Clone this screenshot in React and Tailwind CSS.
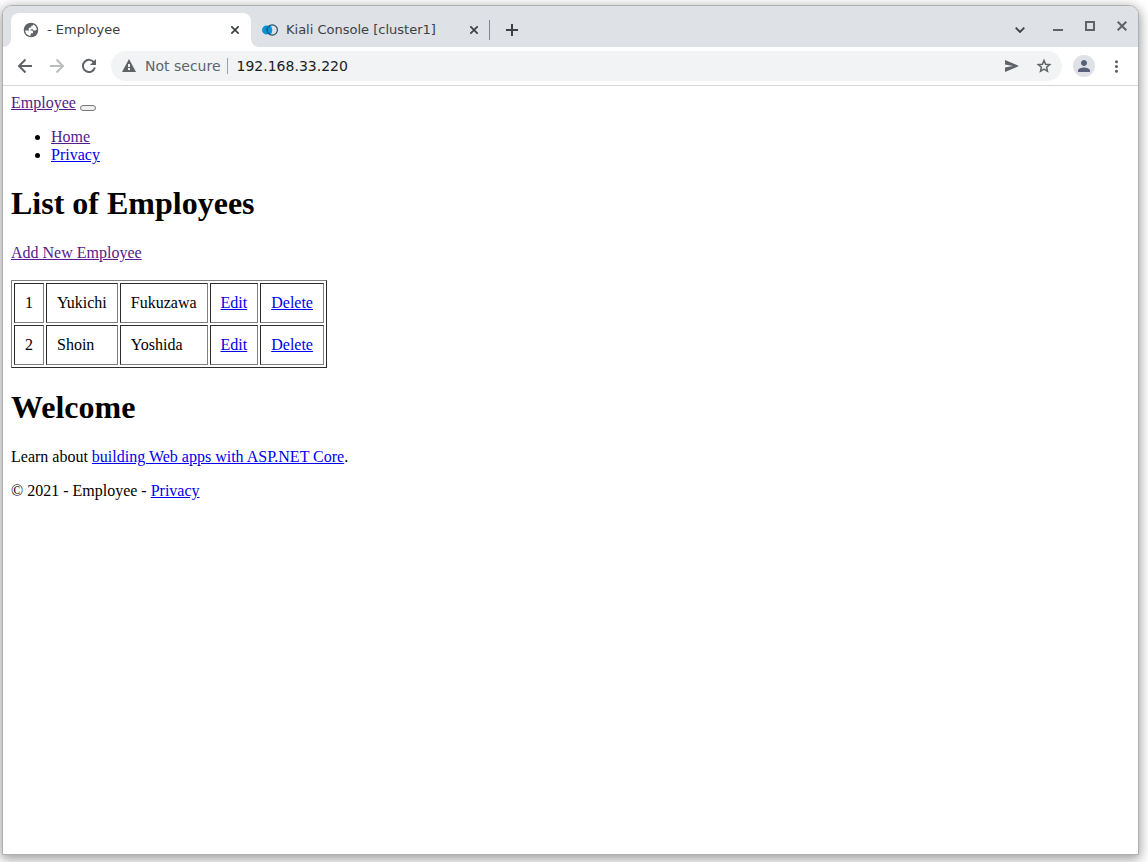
import React, { useState } from "react";
import { MdMoreVert, MdPerson } from "react-icons/md";

const employees = [
  { id: 1, first: "Yukichi", last: "Fukuzawa" },
  { id: 2, first: "Shoin", last: "Yoshida" },
];

function CloseIcon() {
  return (
    <svg width="8" height="8" viewBox="0 0 8 8" stroke="currentColor" strokeWidth="1.7" aria-hidden="true">
      <path d="M.3 .3 7.7 7.7M7.7 .3.3 7.7" />
    </svg>
  );
}

function GlobeIcon() {
  return (
    <svg width="16" height="16" viewBox="0 0 16 16" aria-hidden="true">
      <circle cx="8" cy="8" r="7.3" fill="#5f6368" />
      <path
        d="M10 2.4C12.2 3.2 13.7 5.3 13.8 7.6L12.4 8.6H10.6L9.6 7.2H7.6V8.4H9.2L10 9.6V11.2H8.4L7.6 12V13.8C4.6 13.6 2.2 11.2 2.2 8.4H4.6L5.6 9.4V6.6L6.6 5.4H8.2V4L10 3.4Z"
        fill="#fff"
      />
    </svg>
  );
}

function KialiIcon() {
  return (
    <svg width="16" height="16" viewBox="0 0 16 16" aria-hidden="true">
      <circle cx="4.4" cy="8" r="4.4" fill="#0093dd" />
      <path d="M8 3A5.6 5.6 0 0 0 8 13A6.5 6.5 0 0 0 8 3Z" fill="#0093dd" />
      <circle cx="10.2" cy="8" r="5.2" fill="none" stroke="#1f4f63" strokeWidth="1.2" />
    </svg>
  );
}

function BackIcon() {
  return (
    <svg width="16" height="16" viewBox="0 0 16 16" fill="none" stroke="currentColor" strokeWidth="2" aria-hidden="true">
      <path d="M15 8H2.5M8.5 1.5 2 8 8.5 14.5" />
    </svg>
  );
}

function ForwardIcon() {
  return (
    <svg width="16" height="16" viewBox="0 0 16 16" fill="none" stroke="currentColor" strokeWidth="2" aria-hidden="true">
      <path d="M1 8H13.5M7.5 1.5 14 8 7.5 14.5" />
    </svg>
  );
}

function ReloadIcon() {
  return (
    <svg width="16" height="16" viewBox="0 0 16 16" fill="none" stroke="currentColor" strokeWidth="2" aria-hidden="true">
      <path d="M13.2 4.7A6.1 6.1 0 1 0 13.9 9.6" />
      <path d="M15 1V7H9Z" fill="currentColor" stroke="none" />
    </svg>
  );
}

function StarIcon() {
  return (
    <svg width="16" height="16" viewBox="0 0 16 16" fill="none" stroke="currentColor" strokeWidth="1.5" aria-hidden="true">
      <path d="M8 2.5 9.6 6.3 13.7 6.6 10.6 9.3 11.5 13.3 8 11.2 4.5 13.3 5.4 9.3 2.3 6.6 6.4 6.3Z" />
    </svg>
  );
}

function Tab({ icon, title, active }) {
  return (
    <div
      role="tab"
      aria-selected={active}
      className={
        active
          ? "flex h-[34px] w-60 items-center rounded-t-lg bg-white pr-2 pl-3"
          : "flex h-[34px] w-[230px] items-center pr-[7px] pl-[3px]"
      }
    >
      {icon}
      <span className="ml-2 flex-1 truncate">{title}</span>
      <button aria-label={"Close " + title} className="flex size-4 items-center justify-center">
        <CloseIcon />
      </button>
    </div>
  );
}

function TabStrip() {
  return (
    <div className="flex h-[41px] items-end rounded-t-[9px] bg-[#dee1e6] text-[13px] text-[#3c4043]">
      <div role="tablist" className="flex items-end">
        <svg width="8" height="8" viewBox="0 0 8 8" fill="#fff" aria-hidden="true">
          <path d="M8 0A8 8 0 0 1 0 8H8Z" />
        </svg>
        <Tab active icon={<GlobeIcon />} title="- Employee" />
        <svg width="8" height="8" viewBox="0 0 8 8" fill="#fff" aria-hidden="true">
          <path d="M0 0A8 8 0 0 0 8 8H0Z" />
        </svg>
        <Tab active={false} icon={<KialiIcon />} title="Kiali Console [cluster1]" />
      </div>
      <div className="mb-[7px] h-5 border-r border-[#80868b]" aria-hidden="true" />
      <button aria-label="New tab" className="ml-2 flex h-[34px] w-7 items-center justify-center">
        <svg width="12" height="12" viewBox="0 0 12 12" stroke="currentColor" strokeWidth="2">
          <path d="M6 0V12M0 6H12" />
        </svg>
      </button>
      <div className="flex-1" />
      <button aria-label="Search tabs" className="mr-1.5 flex h-[34px] w-8 items-center justify-center">
        <svg width="10" height="6" viewBox="0 0 10 6" fill="none" stroke="currentColor" strokeWidth="1.8">
          <path d="M.7 .7 5 5 9.3 .7" />
        </svg>
      </button>
      <div className="flex self-start text-[#5f6368]">
        <button aria-label="Minimize" className="flex h-10 w-8 items-center justify-center">
          <svg width="10" height="10" viewBox="0 0 10 10" fill="currentColor">
            <path d="M0 8H10V10H0Z" />
          </svg>
        </button>
        <button aria-label="Maximize" className="flex h-10 w-8 items-center justify-center">
          <svg width="10" height="10" viewBox="0 0 10 10" fill="none" stroke="currentColor" strokeWidth="2">
            <path d="M1 1H9V9H1Z" />
          </svg>
        </button>
        <button aria-label="Close window" className="flex h-10 w-8 items-center justify-center">
          <svg width="10" height="10" viewBox="0 0 10 10" stroke="currentColor" strokeWidth="2">
            <path d="M.7 .7 9.3 9.3M9.3 .7.7 9.3" />
          </svg>
        </button>
      </div>
    </div>
  );
}

function ToolButton({ label, className, children }) {
  return (
    <button aria-label={label} className={"flex h-[30px] w-8 items-center justify-center " + (className || "")}>
      {children}
    </button>
  );
}

function Toolbar() {
  const [url, setUrl] = useState("192.168.33.220");
  return (
    <div className="flex h-[39px] items-center border-b border-[#d5d7da] pl-1.5 text-[14px] text-[#5f6368]">
      <ToolButton label="Back"><BackIcon /></ToolButton>
      <ToolButton label="Forward" className="text-[#babcbe]"><ForwardIcon /></ToolButton>
      <ToolButton label="Reload"><ReloadIcon /></ToolButton>
      <div className="ml-1.5 flex h-[30px] flex-1 items-center rounded-full bg-[#f1f3f4] pr-0.5 pl-[11px]">
        <svg width="14" height="14" viewBox="0 0 14 14" aria-hidden="true">
          <path d="M7 0 14 13H0Z" fill="#5f6368" />
          <path d="M6 5H8V8H6ZM6 9H8V11H6Z" fill="#f1f3f4" />
        </svg>
        <label htmlFor="address" className="ml-[9px]">Not secure</label>
        <div className="ml-1.5 h-4 border-r border-[#9aa0a6]" aria-hidden="true" />
        <input
          id="address"
          value={url}
          onChange={(e) => setUrl(e.target.value)}
          className="ml-[9px] min-w-0 flex-1 bg-transparent text-[#202124] outline-none"
        />
        <ToolButton label="Share">
          <svg width="14" height="12" viewBox="0 0 14 12" fill="currentColor">
            <path d="M0 0 14 6 0 12V7.5L8 6 0 4.5Z" />
          </svg>
        </ToolButton>
        <ToolButton label="Bookmark"><StarIcon /></ToolButton>
      </div>
      <button
        aria-label="Profile"
        className="ml-[11px] flex size-[22px] items-center justify-center rounded-full bg-[#dee1e6] text-[#56607a]"
      >
        <MdPerson size={18} />
      </button>
      <ToolButton label="Menu" className="mr-1.5 ml-[5px]"><MdMoreVert size={19} /></ToolButton>
    </div>
  );
}

const link = "text-[#0000ee] underline";
const visited = "text-[#551a8b] underline";
const cell =
  "border border-t-[#2c2c2c] border-l-[#2c2c2c] border-r-[#808080] border-b-[#808080] p-2.5";

function EmployeeTable() {
  return (
    <table className="mt-[18px] border-separate border-spacing-0.5 border border-t-[#808080] border-l-[#808080] border-r-[#2c2c2c] border-b-[#2c2c2c]">
      <tbody>
        {employees.map((e) => (
          <tr key={e.id}>
            <td className={cell}>{e.id}</td>
            <td className={cell}>{e.first}</td>
            <td className={cell}>{e.last}</td>
            <td className={cell}><a href="#edit" className={link}>Edit</a></td>
            <td className={cell}><a href="#delete" className={link}>Delete</a></td>
          </tr>
        ))}
      </tbody>
    </table>
  );
}

function Page() {
  return (
    <div className="p-2 font-['Liberation_Serif',serif] text-[16px] leading-[18px] text-black">
      <header>
        <nav>
          <div className="flex gap-1">
            <a href="#employee" className={visited}>Employee</a>
            <button
              aria-label="Toggle navigation"
              className="mt-[11px] h-1.5 w-4 rounded-[3px] border border-[#767676] bg-[#efefef]"
            />
          </div>
          <ul className="mt-4 list-disc pl-10">
            <li><a href="#home" className={visited}>Home</a></li>
            <li><a href="#privacy" className={link}>Privacy</a></li>
          </ul>
        </nav>
      </header>
      <main>
        <h1 className="mt-[21px] text-[32px] leading-[37px] font-bold">List of Employees</h1>
        <p className="mt-[22px]"><a href="#add" className={visited}>Add New Employee</a></p>
        <EmployeeTable />
        <h1 className="mt-[21px] text-[32px] leading-[37px] font-bold">Welcome</h1>
        <p className="mt-[22px]">
          Learn about <a href="#learn" className={link}>building Web apps with ASP.NET Core</a>.
        </p>
      </main>
      <footer className="mt-4">
        © 2021 - Employee - <a href="#privacy" className={link}>Privacy</a>
      </footer>
    </div>
  );
}

export default function App() {
  return (
    <div className="flex min-h-screen flex-col bg-white pt-[5px] pr-[9px] pb-[7px] pl-0.5 font-['DejaVu_Sans',sans-serif]">
      <div className="flex flex-1 flex-col rounded-t-[10px] border border-[#b0b0b0] bg-white shadow-[0_3px_12px_1px_rgba(0,0,0,0.4)]">
        <TabStrip />
        <Toolbar />
        <Page />
      </div>
    </div>
  );
}
